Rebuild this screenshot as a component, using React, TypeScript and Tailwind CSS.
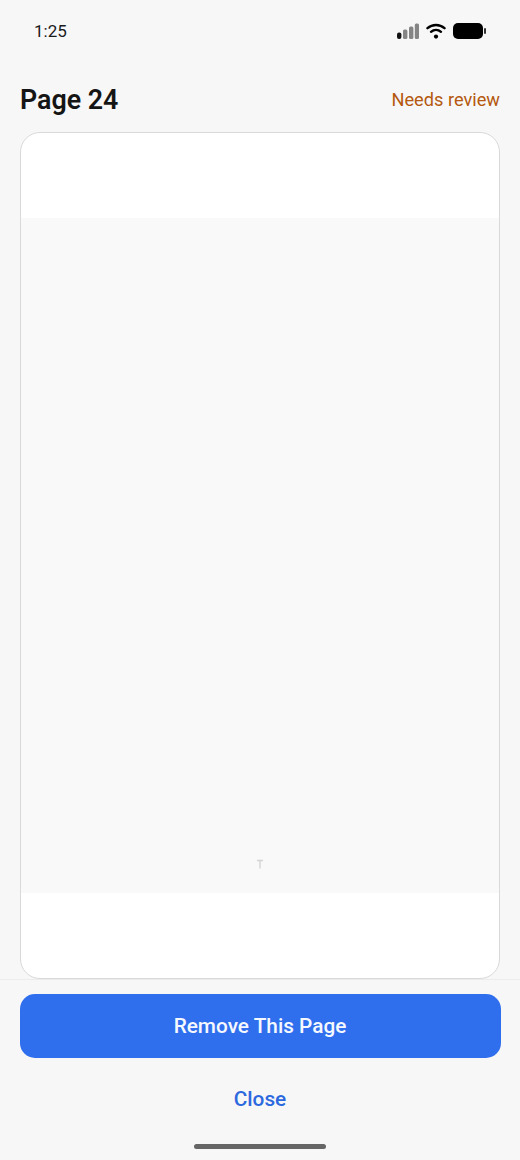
export default function App() {
  return (
    <div className="flex h-[1160px] w-[520px] flex-col overflow-hidden bg-[#f7f7f8] font-['Roboto',sans-serif]">
      <div className="flex h-[62px] shrink-0 items-center justify-between pl-[34px] pr-[34px]">
        <span className="text-[17px] leading-[20px] text-[#1a1a1a]">1:25</span>
        <div className="flex items-center gap-[7px]">
          <svg width="22" height="16" viewBox="0 0 22 16">
            <rect x="0" y="9.5" width="4.4" height="6.5" rx="2" fill="#111" />
            <rect x="6" y="6.5" width="4.4" height="9.5" rx="1.5" fill="#858585" />
            <rect x="12" y="3.5" width="4.4" height="12.5" rx="1.5" fill="#858585" />
            <rect x="17.8" y="0.5" width="4.2" height="15.5" rx="1.5" fill="#858585" />
          </svg>
          <svg width="20" height="16" viewBox="0 0 20 16" fill="none" stroke="#000" strokeLinecap="round">
            <path d="M1.5 5.2C6.3 0.9 13.7 0.9 18.5 5.2" strokeWidth="2.4" />
            <path d="M5 8.8C7.9 6.3 12.1 6.3 15 8.8" strokeWidth="2.4" />
            <circle cx="10" cy="13.6" r="2.1" fill="#000" stroke="none" />
          </svg>
          <svg width="33" height="16" viewBox="0 0 33 16">
            <rect x="0" y="0" width="30" height="16" rx="5" fill="#000" />
            <rect x="31" y="5" width="2" height="6" rx="1" fill="#333" />
          </svg>
        </div>
      </div>
      <div className="flex h-[70px] shrink-0 items-center justify-between px-5 pt-[6px]">
        <h1 className="text-[26.8px] font-semibold leading-[34px] text-[#151515]">Page 24</h1>
        <span className="text-[18.2px] leading-[24px] text-[#b4590f]">Needs review</span>
      </div>
      <div className="mx-5 flex h-[847px] shrink-0 flex-col overflow-hidden rounded-[20px] border border-[#d9d9d9] bg-white">
        <div className="h-[85px] shrink-0" />
        <div className="flex flex-1 items-end justify-center bg-[#f9f9f9] pb-[24px]">
          <svg width="8" height="10" viewBox="0 0 8 10">
            <path d="M1 1.5H7M4 1.5V9.5" stroke="#d4d4d4" strokeWidth="1.4" />
          </svg>
        </div>
        <div className="h-[85px] shrink-0" />
      </div>
      <div className="flex flex-1 flex-col items-center border-t border-[#ececec] px-[19.5px] pt-[14px]">
        <button className="flex h-[63.5px] w-full shrink-0 items-center justify-center rounded-[15px] bg-[#2f6fed] pt-[1px] text-[20.8px] font-medium text-[#f5f8ff]">
          Remove This Page
        </button>
        <button className="mt-[22.5px] flex h-[40px] items-center justify-center text-[20.8px] font-medium text-[#2c69de]">
          Close
        </button>
        <div className="mt-[24px] h-[5px] w-[132px] rounded-full bg-[#666666]" />
      </div>
    </div>
  );
}
